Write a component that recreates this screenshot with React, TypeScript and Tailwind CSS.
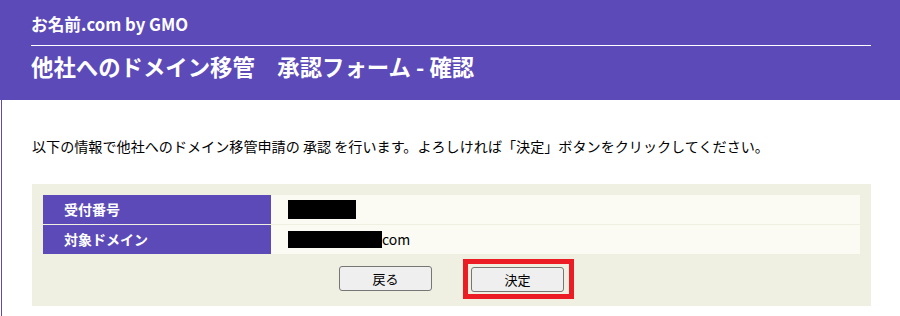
import React from "react";

const font = { fontFamily: '"Meiryo", "Noto Sans CJK JP", "Noto Sans", sans-serif' };

export default function App() {
  return (
    <div className="w-[900px] h-[316px] bg-white overflow-hidden text-black" style={font}>
      <header className="bg-[#5c4ab8] h-[100px] pl-[31px] pr-[29px] pt-[13px] text-white">
        <div className="text-[16.7px] font-bold leading-[22px] h-[32px]">お名前.com by GMO</div>
        <div className="h-px bg-white" />
        <h1 className="text-[22.4px] font-bold leading-[30px] mt-[5px]">他社へのドメイン移管　承認フォーム - 確認</h1>
      </header>
      <main className="ml-px border-l border-[#5c4ab8] h-[216px] pl-[30px] pr-[29px]">
        <p className="text-[14.1px] leading-[20px] pt-[36px]">
          以下の情報で他社へのドメイン移管申請の 承認 を行います。よろしければ「決定」ボタンをクリックしてください。
        </p>
        <div className="mt-[28px] bg-[#f0f0e2] px-[11px] pt-[11px] pb-[14px]">
          <div className="flex flex-col gap-px">
            <div className="flex h-[29px]">
              <div className="w-[228px] bg-[#5c4ab8] text-white font-bold text-[14px] pl-[21px] flex items-center">受付番号</div>
              <div className="flex-1 bg-[#fbfbf3] pl-[17px] flex items-center">
                <span className="block w-[68px] h-[19px] bg-black" />
              </div>
            </div>
            <div className="flex h-[29px]">
              <div className="w-[228px] bg-[#5c4ab8] text-white font-bold text-[14px] pl-[21px] flex items-center">対象ドメイン</div>
              <div className="flex-1 bg-[#fbfbf3] pl-[17px] flex items-center text-[14px]">
                <span className="block w-[94px] h-[17px] bg-black" />
                <span>com</span>
              </div>
            </div>
          </div>
          <div className="flex justify-center gap-[39px] mt-[12px]">
            <button className="w-[93px] h-[25px] bg-[#efefef] border border-[#767676] rounded-[3px] text-[13px] leading-none">戻る</button>
            <div className="relative">
              <button className="w-[93px] h-[25px] bg-[#efefef] border border-[#767676] rounded-[3px] text-[13px] leading-none">決定</button>
              <span className="absolute left-[-8px] right-[-10px] top-[-7px] bottom-[-7px] border-[5px] border-[#ec1c24] pointer-events-none" />
            </div>
          </div>
        </div>
      </main>
    </div>
  );
}
